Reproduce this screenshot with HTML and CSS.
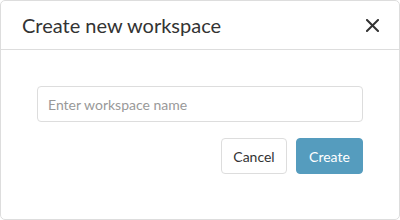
FILE: index.html
```html
<!DOCTYPE html>
<html lang="en">
<head>
    <meta charset="UTF-8">
    <title>Create new workspace</title>
    <link rel="stylesheet" href="styles.css">
</head>
<body>
    <div class="modal">
        <div class="modal-header">
            <h2>Create new workspace</h2>
            <button class="close-btn" aria-label="Close">
                <svg width="13" height="13" viewBox="0 0 13 13">
                    <path d="M1 1 L12 12 M12 1 L1 12" stroke="#333" stroke-width="2" stroke-linecap="square"/>
                </svg>
            </button>
        </div>
        <div class="modal-body">
            <input type="text" placeholder="Enter workspace name">
            <div class="actions">
                <button class="btn btn-cancel">Cancel</button>
                <button class="btn btn-create">Create</button>
            </div>
        </div>
    </div>
</body>
</html>
```

FILE: styles.css
```css
body {
    margin: 0;
    font-family: Lato, 'Noto Sans', sans-serif;
    background-color: #ffffff;
}

.modal {
    width: 400px;
    height: 220px;
    box-sizing: border-box;
    border: 1px solid #dddddd;
    border-radius: 5px;
    background-color: #ffffff;
}

.modal-header {
    height: 48px;
    display: flex;
    align-items: center;
    justify-content: space-between;
    padding: 0 21px;
    border-bottom: 1px solid #dddddd;
}

.modal-header h2 {
    margin: 0;
    font-size: 20px;
    font-weight: 400;
    color: #333333;
}

.close-btn {
    background: none;
    border: none;
    padding: 0;
    margin-right: -1px;
    display: flex;
    cursor: pointer;
}

.modal-body {
    padding: 36px 36px 0 36px;
}

.modal-body input {
    display: block;
    width: 100%;
    height: 36px;
    box-sizing: border-box;
    padding: 0 10px;
    border: 1px solid #dddddd;
    border-radius: 4px;
    font-family: Lato, 'Noto Sans', sans-serif;
    font-size: 14px;
    color: #333333;
    outline: none;
}

.modal-body input::placeholder {
    color: #999999;
}

.actions {
    display: flex;
    justify-content: flex-end;
    gap: 9px;
    margin-top: 16px;
}

.btn {
    height: 36px;
    padding: 0;
    border-radius: 4px;
    font-family: Lato, 'Noto Sans', sans-serif;
    font-size: 14px;
    cursor: pointer;
}

.btn-cancel {
    width: 66px;
    background-color: #ffffff;
    border: 1px solid #dddddd;
    color: #333333;
}

.btn-create {
    width: 67px;
    background-color: #559cbe;
    border: 1px solid #559cbe;
    color: #ffffff;
}
```
